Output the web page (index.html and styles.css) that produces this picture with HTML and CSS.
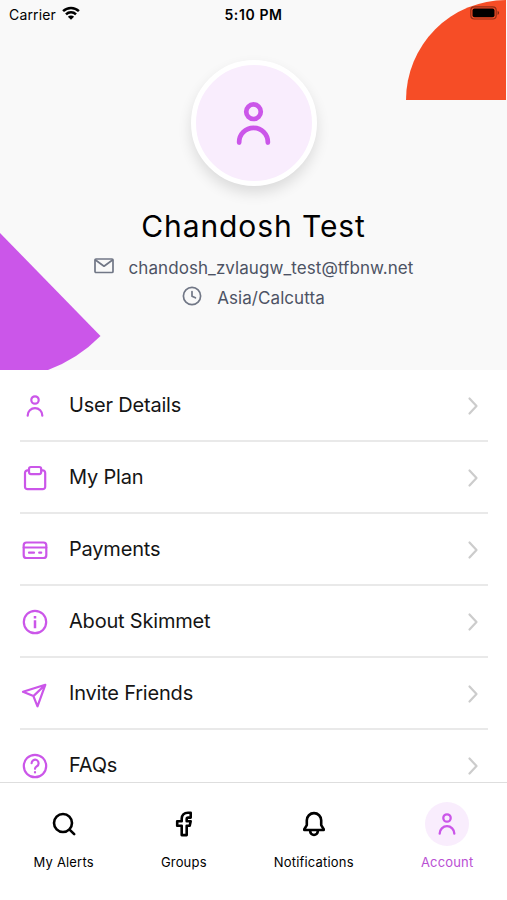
FILE: index.html
```html
<!DOCTYPE html>
<html lang="en">
<head>
    <meta charset="UTF-8">
    <meta name="viewport" content="width=device-width, initial-scale=1.0">
    <title>Account</title>
    <link rel="stylesheet" href="styles.css">
</head>
<body>

    <svg class="hidden">
        <symbol id="user" viewBox="0 0 28 28">
            <circle cx="14" cy="8" r="3.700"/>
            <path d="M6.700 23.700v-.2a7.300 7.300 0 0 1 14.600 0v.2"/>
        </symbol>
        <symbol id="chevron" viewBox="0 0 12 20">
            <path d="M2.500 2.500 9.500 10l-7 7.500"/>
        </symbol>
    </svg>

    <div class="header">
        <svg class="shape shape-orange" viewBox="0 0 100 100"><path d="M0 100A100 100 0 0 1 100 0V100z"/></svg>
        <svg class="shape shape-purple" viewBox="0 0 101 137"><path d="M0 0 100.500 103A144.500 144.500 0 0 1 48 137H0z"/></svg>

        <div class="status-bar">
            <div class="carrier">
                <span>Carrier</span>
                <svg class="wifi" viewBox="0 0 18 14">
                    <path d="M1.100 5.200a11.200 11.200 0 0 1 15.800 0M4 8.300a7.100 7.100 0 0 1 10 0"/>
                    <path class="solid" d="M9 13.800 5.900 10.700a4.400 4.400 0 0 1 6.200 0z"/>
                </svg>
            </div>
            <span class="time">5:10 PM</span>
            <svg class="battery" viewBox="0 0 30 14">
                <rect class="case" x=".8" y=".8" width="25.400" height="12.200" rx="3.500"/>
                <rect x="2.500" y="2.500" width="22" height="8.800" rx="2"/>
                <path d="M27.600 4.800c2 .8 2 3.400 0 4.200z" opacity=".5"/>
            </svg>
        </div>

        <div class="avatar"><svg><use href="#user"/></svg></div>
        <h1>Chandosh Test</h1>
        <div class="info email">
            <svg viewBox="0 0 20 20"><rect x="1" y="3" width="18" height="13.500" rx="1"/><path d="m1.500 4 8.500 6.200L18.500 4"/></svg>
            <span>chandosh_zvlaugw_test@tfbnw.net</span>
        </div>
        <div class="info zone">
            <svg viewBox="0 0 20 20"><circle cx="10" cy="10" r="8.600"/><path d="M10 5.500v4.800l3.400 1.500"/></svg>
            <span>Asia/Calcutta</span>
        </div>
    </div>

    <div class="menu">
        <div class="row">
            <svg class="icon"><use href="#user"/></svg>
            <span>User Details</span>
            <svg class="chevron"><use href="#chevron"/></svg>
        </div>
        <div class="row">
            <svg class="icon" viewBox="0 0 28 28"><path d="M8 6.400H6.500A2.500 2.500 0 0 0 4 8.900v13.800a2.500 2.500 0 0 0 2.500 2.500h15.200a2.500 2.500 0 0 0 2.500-2.500V8.900a2.500 2.500 0 0 0-2.500-2.500h-1.500"/><rect x="8" y="3" width="12.200" height="7.100" rx="2"/></svg>
            <span>My Plan</span>
            <svg class="chevron"><use href="#chevron"/></svg>
        </div>
        <div class="row">
            <svg class="icon" viewBox="0 0 28 28"><rect x="2.700" y="6.500" width="22.600" height="15.500" rx="2.800"/><path d="M2.700 11.500h22.600M8 16.700h5M18.200 16.700h2"/></svg>
            <span>Payments</span>
            <svg class="chevron"><use href="#chevron"/></svg>
        </div>
        <div class="row">
            <svg class="icon" viewBox="0 0 28 28"><circle cx="14" cy="14" r="11.200"/><path class="stem" d="M14 12.200v8M14 8v2.500"/></svg>
            <span>About Skimmet</span>
            <svg class="chevron"><use href="#chevron"/></svg>
        </div>
        <div class="row">
            <svg class="icon" viewBox="0 0 28 28"><path d="M24.300 4.800 2 11.800l10.400 4.300 4.100 10.200zL12.400 16.100"/></svg>
            <span>Invite Friends</span>
            <svg class="chevron"><use href="#chevron"/></svg>
        </div>
        <div class="row">
            <svg class="icon" viewBox="0 0 28 28"><circle cx="14" cy="14" r="11.200"/><path d="M10.600 11.200a3.500 3.500 0 1 1 5.300 3c-1.200.8-1.900 1.300-1.900 2.600"/><path d="M14 20v.4"/></svg>
            <span>FAQs</span>
            <svg class="chevron"><use href="#chevron"/></svg>
        </div>
    </div>

    <div class="navbar">
        <div class="tab">
            <div class="tab-icon"><svg viewBox="0 0 28 28"><circle cx="13" cy="13" r="9"/><path d="m19.800 19.800 4.400 4.400"/></svg></div>
            <span>My Alerts</span>
        </div>
        <div class="tab">
            <div class="tab-icon"><svg viewBox="0 0 28 28"><path d="M20.700 2.700H18c-4 0-6.300 2.500-6.300 6v2.600H7.200v4.500h4.500v9.300h5v-9.300h3l1-4.500h-4V9.100c0-1 .5-1.500 1.500-1.500h2.500z"/></svg></div>
            <span>Groups</span>
        </div>
        <div class="tab">
            <div class="tab-icon"><svg viewBox="0 0 28 28"><path d="M6.800 10.300a7.200 7.200 0 0 1 14.400 0v4.800l2.500 4.100v.8H4.300v-.8l2.500-4.100zM10.200 20.500v.7a3.800 3.800 0 0 0 7.600 0v-.7"/></svg></div>
            <span>Notifications</span>
        </div>
        <div class="tab active">
            <div class="tab-icon"><svg><use href="#user"/></svg></div>
            <span>Account</span>
        </div>
    </div>

</body>
</html>
```
FILE: styles.css
```css
* {
    box-sizing: border-box;
}

body {
    display: flex;
    flex-direction: column;
    height: 900px;
    margin: 0;
    overflow: hidden;
    font-family: Inter, sans-serif;
    color: #000;
    background-color: #fff;
}

svg {
    flex: none;
    fill: none;
    stroke: currentColor;
    stroke-width: 2.2;
    stroke-linecap: round;
    stroke-linejoin: round;
}

.hidden {
    display: none;
}

.header {
    position: relative;
    display: flex;
    flex-direction: column;
    align-items: center;
    flex: none;
    height: 370px;
    background-color: #f9f9f9;
}

.shape {
    position: absolute;
    stroke: none;
}

.shape-orange {
    top: 0;
    right: 1px;
    width: 100px;
    height: 100px;
    fill: #f64d26;
}

.shape-purple {
    left: 0;
    bottom: 0;
    width: 101px;
    height: 137px;
    fill: #cb56e9;
}

.status-bar {
    position: relative;
    display: grid;
    grid-template-columns: 1fr auto 1fr;
    align-items: center;
    width: 100%;
    height: 28px;
    padding: 0 7px 0 9px;
    font-size: 14px;
}

.carrier {
    display: flex;
    align-items: center;
    gap: 6px;
    letter-spacing: .15px;
}

.wifi {
    width: 18px;
    height: 14px;
    margin-top: -3px;
    stroke-width: 2.5;
    stroke-linecap: butt;
}

.wifi .solid {
    fill: #000;
    stroke: none;
}

.time {
    margin-right: 2px;
    font-weight: 600;
    letter-spacing: .6px;
}

.battery {
    justify-self: end;
    width: 30px;
    height: 14px;
    margin-top: -2px;
    fill: #000;
    stroke: none;
}

.battery .case {
    fill: none;
    stroke: #000;
    stroke-width: 1.2;
    opacity: .4;
}

.avatar {
    display: flex;
    align-items: center;
    justify-content: center;
    width: 126px;
    height: 126px;
    margin-top: 32px;
    border: 5px solid #fff;
    border-radius: 50%;
    color: #cb56e9;
    background-color: #f9edfd;
    box-shadow: 0 7px 14px rgba(0, 0, 0, .12);
}

.avatar svg {
    width: 55px;
    height: 55px;
    stroke-width: 2.4;
}

h1 {
    margin: 22px 0 0;
    font-size: 30px;
    font-weight: 400;
    line-height: 36px;
    letter-spacing: .9px;
}

.info {
    display: flex;
    align-items: center;
    gap: 15px;
    height: 30px;
    font-size: 17px;
    letter-spacing: .07px;
    color: #4d5364;
}

.info svg {
    width: 20px;
    height: 20px;
    margin-top: -4px;
    stroke: #717786;
    stroke-width: 1.7;
}

.email {
    margin-top: 9px;
}

.menu {
    flex: 1;
    min-height: 0;
    padding: 0 19px 0 20px;
    overflow: hidden;
}

.row {
    display: flex;
    align-items: center;
    height: 72px;
    padding-left: 1px;
    border-bottom: 2px solid #e9e9e9;
    font-size: 20px;
    letter-spacing: -.2px;
}

.row span {
    flex: 1;
    margin-left: 20px;
    color: #151515;
}

.icon {
    width: 28px;
    height: 28px;
    margin-top: 2px;
    color: #cb56e9;
}

.stem {
    stroke-width: 2.5;
    stroke-linecap: butt;
}

.chevron {
    width: 12px;
    height: 20px;
    margin: 2px 9px 0 0;
    color: #ccc;
}

.navbar {
    display: flex;
    justify-content: space-around;
    flex: none;
    height: 118px;
    padding-top: 19px;
    border-top: 1px solid #dedede;
    background-color: #fff;
}

.tab {
    display: flex;
    flex-direction: column;
    align-items: center;
    font-size: 13px;
    line-height: 16px;
    letter-spacing: .18px;
}

.tab-icon {
    display: flex;
    align-items: center;
    justify-content: center;
    width: 44px;
    height: 44px;
    margin-bottom: 8px;
    border-radius: 50%;
}

.tab-icon svg {
    width: 28px;
    height: 28px;
    stroke-width: 2.6;
}

.active {
    color: #b94fd3;
}

.active .tab-icon {
    color: #cb56e9;
    background-color: #f9edfd;
}

.active .tab-icon svg {
    stroke-width: 2.3;
}
```
